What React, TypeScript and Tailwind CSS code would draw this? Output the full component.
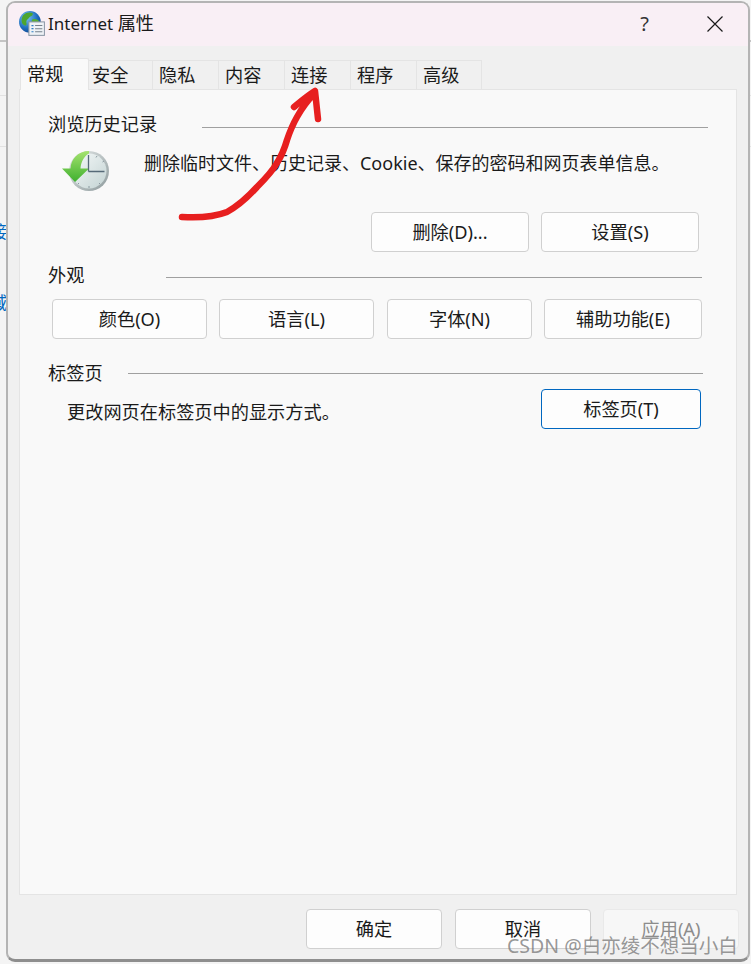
const font = { fontFamily: '"Noto Sans", "Noto Sans CJK SC", sans-serif' };

const tabs = [
  { label: "安全", w: "w-[64px]", pad: "pl-[3px]" },
  { label: "隐私", w: "w-[66px]", pad: "pl-[6px]" },
  { label: "内容", w: "w-[66px]", pad: "pl-[6px]" },
  { label: "连接", w: "w-[66px]", pad: "pl-[6px]" },
  { label: "程序", w: "w-[66px]", pad: "pl-[6px]" },
  { label: "高级", w: "w-[65px]", pad: "pl-[6px]" },
];

function GlobeIcon() {
  return (
    <svg width="29" height="29" viewBox="0 0 28 28" className="shrink-0">
      <defs>
        <radialGradient id="sea" cx="0.35" cy="0.3" r="0.8">
          <stop offset="0" stopColor="#7cc4f0" />
          <stop offset="0.6" stopColor="#1f6fc0" />
          <stop offset="1" stopColor="#0d3f86" />
        </radialGradient>
      </defs>
      <circle cx="11.5" cy="11.5" r="10.5" fill="url(#sea)" />
      <path d="M5 5c3-3 7-3 9-2 1 2-1 3-3 4-1 2-3 2-3 5 1 3-1 4-3 2C3 12 3 8 5 5z" fill="#4da52f" />
      <path d="M14 9c3-1 6 0 7 3 0 3-2 6-4 7-2-1-2-3-3-5-1-2-1-4 0-5z" fill="#58ad35" />
      <rect x="10.5" y="11.5" width="15" height="13" fill="#eef2f6" stroke="#8a97a6" />
      <path d="M13 15h2M13 18h2M13 21h2" stroke="#2f7fc4" strokeWidth="1.2" />
      <path d="M16.500 15h7M16.500 18h7M16.500 21h7" stroke="#76818d" />
    </svg>
  );
}

function ClockIcon() {
  return (
    <svg width="50" height="44" viewBox="0 0 50 44" className="shrink-0">
      <defs>
        <linearGradient id="face" x1="0" y1="0" x2="1" y2="1">
          <stop offset="0" stopColor="#f7fafa" />
          <stop offset="1" stopColor="#c3d3d3" />
        </linearGradient>
        <linearGradient id="rim" x1="0" y1="0" x2="1" y2="1">
          <stop offset="0" stopColor="#e6eaea" />
          <stop offset="1" stopColor="#8d9a9c" />
        </linearGradient>
        <linearGradient id="arrow" x1="0" y1="0" x2="0" y2="1">
          <stop offset="0" stopColor="#a5e36f" />
          <stop offset="1" stopColor="#3fb02f" />
        </linearGradient>
      </defs>
      <circle cx="28" cy="21" r="20" fill="url(#rim)" />
      <circle cx="28" cy="21" r="17.5" fill="url(#face)" />
      <path d="M28 1C17 1 10 9 9.500 18.500H1L14 32l14-13.500H19.500C20 12 23 6 28 3.500z" fill="url(#arrow)" />
      <path d="M27.500 5v16.500M27.500 21.500h16" stroke="#566a78" strokeWidth="1.300" fill="none" />
      <path d="M28 36v2M38 33l1 1M43 11l-1.500 1M36 6l-1 1.500M18 33l-1 1" stroke="#8b9aa0" />
    </svg>
  );
}

function Btn({ label, w, kind = "normal" }: { label: string; w: string; kind?: "normal" | "focus" | "off" }) {
  const look =
    kind === "focus"
      ? "border-[#0067c0] bg-[#fdfdfd] text-[#1a1a1a]"
      : kind === "off"
        ? "border-[#e9e9e9] bg-[#f7f7f7] text-[#8c8c8c]"
        : "border-[#d0d0d0] bg-[#fdfdfd] text-[#1a1a1a]";
  return (
    <div className={`${w} h-[40px] shrink-0 flex items-center justify-center rounded-[4px] border pt-[2px] text-[18.200px] ${look}`}>
      {label}
    </div>
  );
}

function Heading({ label, line }: { label: string; line: string }) {
  return (
    <div className="flex items-center h-[26px] pt-[2px] text-[18.200px] text-[#1a1a1a]">
      <span>{label}</span>
      <div className={`h-px bg-[#a0a0a0] ${line}`} />
    </div>
  );
}

export default function App() {
  return (
    <div className="relative w-[751px] h-[964px] overflow-hidden bg-[#f4f4f4]" style={font}>
      {/* page peeking out behind the dialog */}
      <div className="absolute left-0 top-[40px] w-full h-[2px] bg-[#c4c4c4]" />
      <div className="absolute left-0 top-[95px] w-full h-px bg-[#e2e2e2]" />
      <div className="absolute left-0 top-[146px] w-full h-px bg-[#e2e2e2]" />
      <div className="absolute left-[-10px] top-[219px] text-[17px] text-[#0067c0]">接</div>
      <div className="absolute left-[-10px] top-[290px] text-[17px] text-[#0067c0]">域</div>

      <div className="relative ml-[6px] mt-[1px] w-[744px] h-[961px] flex flex-col overflow-hidden rounded-[9px] border-[2px] border-[#b4b4b4] bg-[#f0f0f0] border-b-[3px] border-b-[#8e8e8e]">
        <div className="h-[43px] shrink-0 flex items-center bg-[#f9eff5] pl-[10px] pb-[1px] text-[#1a1a1a]">
          <GlobeIcon />
          <span className="ml-[1px] text-[17px]">Internet <span className="text-[18.200px]">属性</span></span>
          <span className="ml-auto text-[20px] text-[#333333]">?</span>
          <svg width="16" height="16" viewBox="0 0 16 16" className="ml-[58px] mr-[25px]">
            <path d="M.5.5l15 15M15.500.5l-15 15" stroke="#1a1a1a" strokeWidth="1.200" />
          </svg>
        </div>

        <div className="flex h-[43px] shrink-0 items-end pl-[12px]">
          <div className="relative z-10 w-[69px] h-[32px] mb-[-1px] flex items-center pl-[6px] rounded-t-[2px] border border-b-0 border-[#e4e4e4] bg-[#f9f9f9] text-[18.200px] text-[#1a1a1a]">
            常规
          </div>
          {tabs.map((t) => (
            <div
              key={t.label}
              className={`${t.w} ${t.pad} h-[29px] pt-[2px] flex items-center border-r border-t border-[#e4e4e4] text-[18.200px] text-[#1a1a1a]`}
            >
              {t.label}
            </div>
          ))}
        </div>

        <div className="ml-[11px] w-[718px] h-[806px] shrink-0 border border-[#e4e4e4] bg-[#f9f9f9] pl-[28px]">
          <div className="mt-[21px]">
            <Heading label="浏览历史记录" line="ml-[45px] w-[506px] translate-y-[2px]" />
          </div>
          <div className="flex items-start mt-[13px] ml-[13px] text-[18px] text-[#1a1a1a]">
            <ClockIcon />
            <span className="ml-[33px] whitespace-nowrap">删除临时文件、历史记录、Cookie、保存的密码和网页表单信息。</span>
          </div>
          <div className="flex gap-[12px] ml-[323px] mt-[18px]">
            <Btn label="删除(D)..." w="w-[158px]" />
            <Btn label="设置(S)" w="w-[158px]" />
          </div>
          <div className="mt-[10px]">
            <Heading label="外观" line="ml-[82px] w-[536px] translate-y-[1px]" />
          </div>
          <div className="flex mt-[11px] ml-[4px]">
            <Btn label="颜色(O)" w="w-[155px]" />
            <div className="ml-[12px]"><Btn label="语言(L)" w="w-[155px]" /></div>
            <div className="ml-[13px]"><Btn label="字体(N)" w="w-[145px]" /></div>
            <div className="ml-[12px]"><Btn label="辅助功能(E)" w="w-[158px]" /></div>
          </div>
          <div className="mt-[21px]">
            <Heading label="标签页" line="ml-[25px] w-[575px] translate-y-[-1px]" />
          </div>
          <div className="flex items-center mt-[3px] ml-[19px] text-[18.200px] text-[#1a1a1a]">
            <span className="translate-y-[4px]">更改网页在标签页中的显示方式。</span>
            <div className="ml-auto mr-[35px]">
              <Btn label="标签页(T)" w="w-[160px]" kind="focus" />
            </div>
          </div>
        </div>

        <div className="flex mt-[14px] ml-[298px]">
          <Btn label="确定" w="w-[136px]" />
          <div className="ml-[13px]"><Btn label="取消" w="w-[136px]" /></div>
          <div className="ml-[12px]"><Btn label="应用(A)" w="w-[136px]" kind="off" /></div>
        </div>
      </div>

      {/* hand drawn annotation */}
      <svg width="751" height="964" viewBox="0 0 751 964" className="absolute inset-0 pointer-events-none">
        <path
          d="M182 217C198 218 214 217 227 212C238 206 248 197 257 187C265 179 272 172 277 163C282 155 285 147 287 140C290 131 293 124 297 117C302 108 308 100 315 93M294 107C300 102 307 96 315 91C316 100 317 110 318 119"
          fill="none"
          stroke="#e71f1f"
          strokeWidth="6.500"
          strokeLinecap="round"
          strokeLinejoin="round"
        />
      </svg>

      <div className="absolute left-[507px] top-[931px] text-[19.500px] leading-[30px] whitespace-nowrap text-[#7d7d7d]/80">
        CSDN @白亦绫不想当小白
      </div>
    </div>
  );
}
